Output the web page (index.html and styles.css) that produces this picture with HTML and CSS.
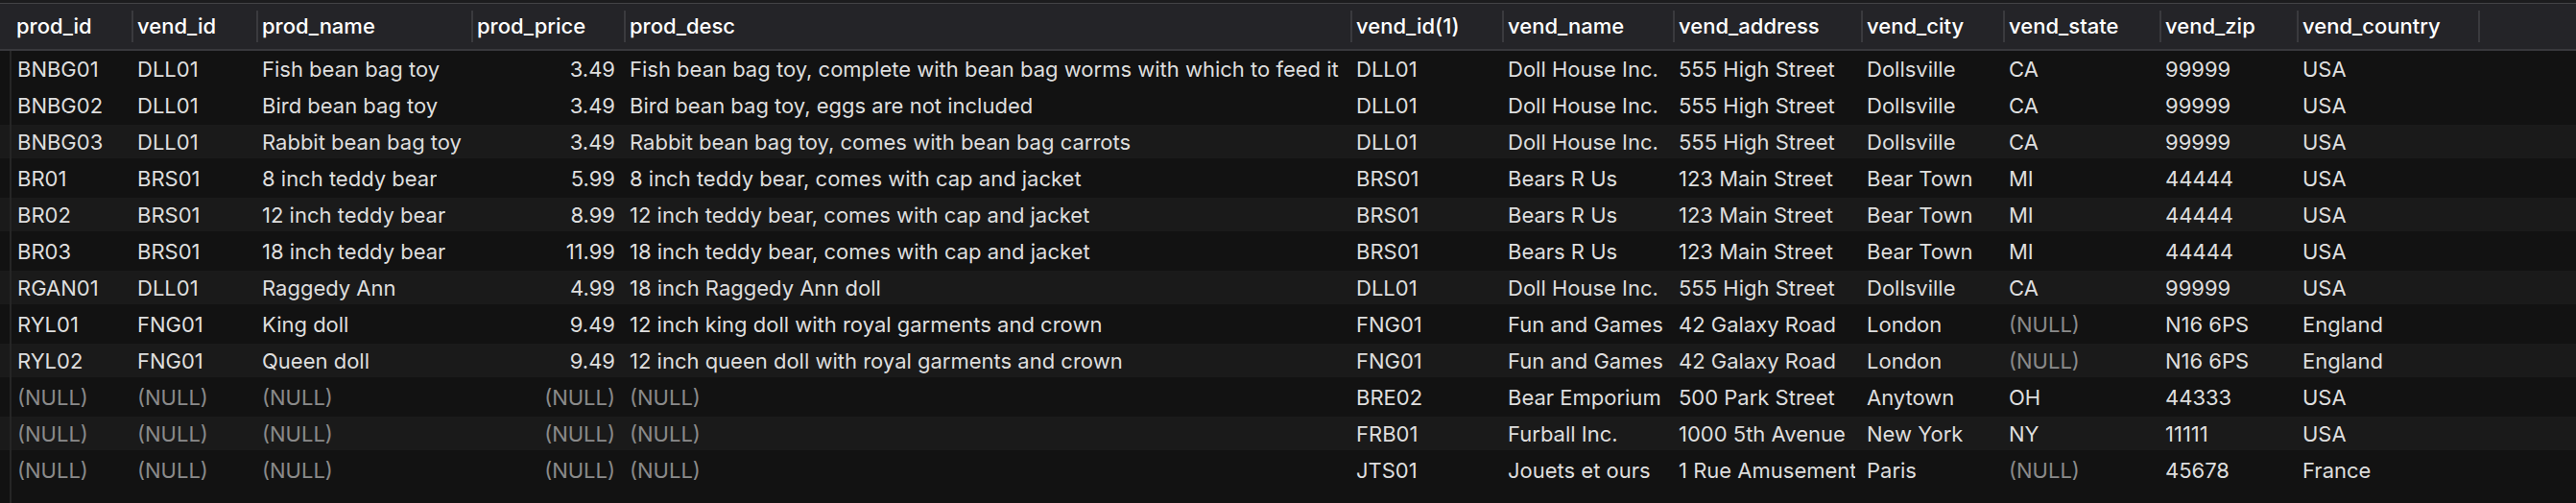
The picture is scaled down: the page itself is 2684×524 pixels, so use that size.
FILE: index.html
```html
<!DOCTYPE html>
<html>
<head>
<meta charset="utf-8">
<link rel="stylesheet" href="styles.css">
</head>
<body>
<div class="topstrip"></div>
<div class="grid head">
  <div class="gut"></div>
  <div class="hc first">prod_id</div>
  <div class="hc">vend_id</div>
  <div class="hc">prod_name</div>
  <div class="hc">prod_price</div>
  <div class="hc">prod_desc</div>
  <div class="hc">vend_id(1)</div>
  <div class="hc">vend_name</div>
  <div class="hc">vend_address</div>
  <div class="hc">vend_city</div>
  <div class="hc">vend_state</div>
  <div class="hc">vend_zip</div>
  <div class="hc">vend_country</div>
  <div class="hc"></div>
</div>
<div class="body">
  <div class="grid row">
    <div class="gut"></div>
    <div class="c"><span>BNBG01</span></div><div class="c"><span>DLL01</span></div><div class="c"><span>Fish bean bag toy</span></div><div class="c num"><span>3.49</span></div><div class="c"><span>Fish bean bag toy, complete with bean bag worms with which to feed it</span></div><div class="c"><span>DLL01</span></div><div class="c"><span>Doll House Inc.</span></div><div class="c"><span>555 High Street</span></div><div class="c"><span>Dollsville</span></div><div class="c"><span>CA</span></div><div class="c"><span>99999</span></div><div class="c"><span>USA</span></div><div></div>
  </div>
  <div class="grid row">
    <div class="gut"></div>
    <div class="c"><span>BNBG02</span></div><div class="c"><span>DLL01</span></div><div class="c"><span>Bird bean bag toy</span></div><div class="c num"><span>3.49</span></div><div class="c"><span>Bird bean bag toy, eggs are not included</span></div><div class="c"><span>DLL01</span></div><div class="c"><span>Doll House Inc.</span></div><div class="c"><span>555 High Street</span></div><div class="c"><span>Dollsville</span></div><div class="c"><span>CA</span></div><div class="c"><span>99999</span></div><div class="c"><span>USA</span></div><div></div>
  </div>
  <div class="grid row alt">
    <div class="gut"></div>
    <div class="c"><span>BNBG03</span></div><div class="c"><span>DLL01</span></div><div class="c"><span>Rabbit bean bag toy</span></div><div class="c num"><span>3.49</span></div><div class="c"><span>Rabbit bean bag toy, comes with bean bag carrots</span></div><div class="c"><span>DLL01</span></div><div class="c"><span>Doll House Inc.</span></div><div class="c"><span>555 High Street</span></div><div class="c"><span>Dollsville</span></div><div class="c"><span>CA</span></div><div class="c"><span>99999</span></div><div class="c"><span>USA</span></div><div></div>
  </div>
  <div class="grid row">
    <div class="gut"></div>
    <div class="c"><span>BR01</span></div><div class="c"><span>BRS01</span></div><div class="c"><span>8 inch teddy bear</span></div><div class="c num"><span>5.99</span></div><div class="c"><span>8 inch teddy bear, comes with cap and jacket</span></div><div class="c"><span>BRS01</span></div><div class="c"><span>Bears R Us</span></div><div class="c"><span>123 Main Street</span></div><div class="c"><span>Bear Town</span></div><div class="c"><span>MI</span></div><div class="c"><span>44444</span></div><div class="c"><span>USA</span></div><div></div>
  </div>
  <div class="grid row alt">
    <div class="gut"></div>
    <div class="c"><span>BR02</span></div><div class="c"><span>BRS01</span></div><div class="c"><span>12 inch teddy bear</span></div><div class="c num"><span>8.99</span></div><div class="c"><span>12 inch teddy bear, comes with cap and jacket</span></div><div class="c"><span>BRS01</span></div><div class="c"><span>Bears R Us</span></div><div class="c"><span>123 Main Street</span></div><div class="c"><span>Bear Town</span></div><div class="c"><span>MI</span></div><div class="c"><span>44444</span></div><div class="c"><span>USA</span></div><div></div>
  </div>
  <div class="grid row">
    <div class="gut"></div>
    <div class="c"><span>BR03</span></div><div class="c"><span>BRS01</span></div><div class="c"><span>18 inch teddy bear</span></div><div class="c num"><span>11.99</span></div><div class="c"><span>18 inch teddy bear, comes with cap and jacket</span></div><div class="c"><span>BRS01</span></div><div class="c"><span>Bears R Us</span></div><div class="c"><span>123 Main Street</span></div><div class="c"><span>Bear Town</span></div><div class="c"><span>MI</span></div><div class="c"><span>44444</span></div><div class="c"><span>USA</span></div><div></div>
  </div>
  <div class="grid row alt">
    <div class="gut"></div>
    <div class="c"><span>RGAN01</span></div><div class="c"><span>DLL01</span></div><div class="c"><span>Raggedy Ann</span></div><div class="c num"><span>4.99</span></div><div class="c"><span>18 inch Raggedy Ann doll</span></div><div class="c"><span>DLL01</span></div><div class="c"><span>Doll House Inc.</span></div><div class="c"><span>555 High Street</span></div><div class="c"><span>Dollsville</span></div><div class="c"><span>CA</span></div><div class="c"><span>99999</span></div><div class="c"><span>USA</span></div><div></div>
  </div>
  <div class="grid row">
    <div class="gut"></div>
    <div class="c"><span>RYL01</span></div><div class="c"><span>FNG01</span></div><div class="c"><span>King doll</span></div><div class="c num"><span>9.49</span></div><div class="c"><span>12 inch king doll with royal garments and crown</span></div><div class="c"><span>FNG01</span></div><div class="c"><span>Fun and Games</span></div><div class="c"><span>42 Galaxy Road</span></div><div class="c"><span>London</span></div><div class="c null"><span>(NULL)</span></div><div class="c"><span>N16 6PS</span></div><div class="c"><span>England</span></div><div></div>
  </div>
  <div class="grid row alt">
    <div class="gut"></div>
    <div class="c"><span>RYL02</span></div><div class="c"><span>FNG01</span></div><div class="c"><span>Queen doll</span></div><div class="c num"><span>9.49</span></div><div class="c"><span>12 inch queen doll with royal garments and crown</span></div><div class="c"><span>FNG01</span></div><div class="c"><span>Fun and Games</span></div><div class="c"><span>42 Galaxy Road</span></div><div class="c"><span>London</span></div><div class="c null"><span>(NULL)</span></div><div class="c"><span>N16 6PS</span></div><div class="c"><span>England</span></div><div></div>
  </div>
  <div class="grid row">
    <div class="gut"></div>
    <div class="c null"><span>(NULL)</span></div><div class="c null"><span>(NULL)</span></div><div class="c null"><span>(NULL)</span></div><div class="c num null"><span>(NULL)</span></div><div class="c null"><span>(NULL)</span></div><div class="c"><span>BRE02</span></div><div class="c"><span>Bear Emporium</span></div><div class="c"><span>500 Park Street</span></div><div class="c"><span>Anytown</span></div><div class="c"><span>OH</span></div><div class="c"><span>44333</span></div><div class="c"><span>USA</span></div><div></div>
  </div>
  <div class="grid row alt">
    <div class="gut"></div>
    <div class="c null"><span>(NULL)</span></div><div class="c null"><span>(NULL)</span></div><div class="c null"><span>(NULL)</span></div><div class="c num null"><span>(NULL)</span></div><div class="c null"><span>(NULL)</span></div><div class="c"><span>FRB01</span></div><div class="c"><span>Furball Inc.</span></div><div class="c"><span>1000 5th Avenue</span></div><div class="c"><span>New York</span></div><div class="c"><span>NY</span></div><div class="c"><span>11111</span></div><div class="c"><span>USA</span></div><div></div>
  </div>
  <div class="grid row">
    <div class="gut"></div>
    <div class="c null"><span>(NULL)</span></div><div class="c null"><span>(NULL)</span></div><div class="c null"><span>(NULL)</span></div><div class="c num null"><span>(NULL)</span></div><div class="c null"><span>(NULL)</span></div><div class="c"><span>JTS01</span></div><div class="c"><span>Jouets et ours</span></div><div class="c"><span>1 Rue Amusement</span></div><div class="c"><span>Paris</span></div><div class="c null"><span>(NULL)</span></div><div class="c"><span>45678</span></div><div class="c"><span>France</span></div><div></div>
  </div>
  <div class="filler"></div>
</div>
</body>
</html>
```

FILE: styles.css
```css
html, body {
  margin: 0;
  padding: 0;
}
body {
  width: 2684px;
  height: 524px;
  overflow: hidden;
  background: #121212;
  font-family: Inter, "Liberation Sans", Arial, sans-serif;
  font-size: 22px;
  display: flex;
  flex-direction: column;
}
.topstrip {
  height: 3px;
  background: #1c1c1e;
  flex: none;
}
.grid {
  display: grid;
  grid-template-columns: 12px 125px 130px 224px 159px 757px 158px 178px 196px 148px 163px 143px 189px 1fr;
}
.head {
  flex: none;
  height: 47px;
  background: #242428;
  border-top: 1px solid #434346;
  border-bottom: 2px solid #38383c;
}
.hc {
  display: flex;
  align-items: center;
  padding-left: 6px;
  padding-bottom: 2px;
  color: #ffffff;
  font-weight: 500;
  white-space: nowrap;
  overflow: hidden;
  background-image: linear-gradient(#3a3a3e, #3a3a3e);
  background-size: 2px 33px;
  background-position: left center;
  background-repeat: no-repeat;
}
.hc.first {
  background-image: none;
  padding-left: 5px;
}
.body {
  flex: 1;
  display: flex;
  flex-direction: column;
}
.row {
  height: 38px;
  flex: none;
  color: #dedede;
}
.row.alt {
  background: linear-gradient(to bottom, transparent 1px, #1a1a1a 1px, #1a1a1a 36px, transparent 36px);
}
.gut {
  border-right: 2px solid #262626;
}
.head .gut {
  border-right: none;
}
.c {
  display: flex;
  align-items: center;
  padding: 0 6px;
  min-width: 0;
}
.c span {
  display: block;
  white-space: nowrap;
  overflow: hidden;
  min-width: 0;
}
.num {
  justify-content: flex-end;
  padding-right: 9px;
}
.null {
  color: #8a8a8a;
}
.filler {
  flex: 1;
  background-image: linear-gradient(#262626, #262626);
  background-size: 2px 100%;
  background-position: 10px 0;
  background-repeat: no-repeat;
}
```
